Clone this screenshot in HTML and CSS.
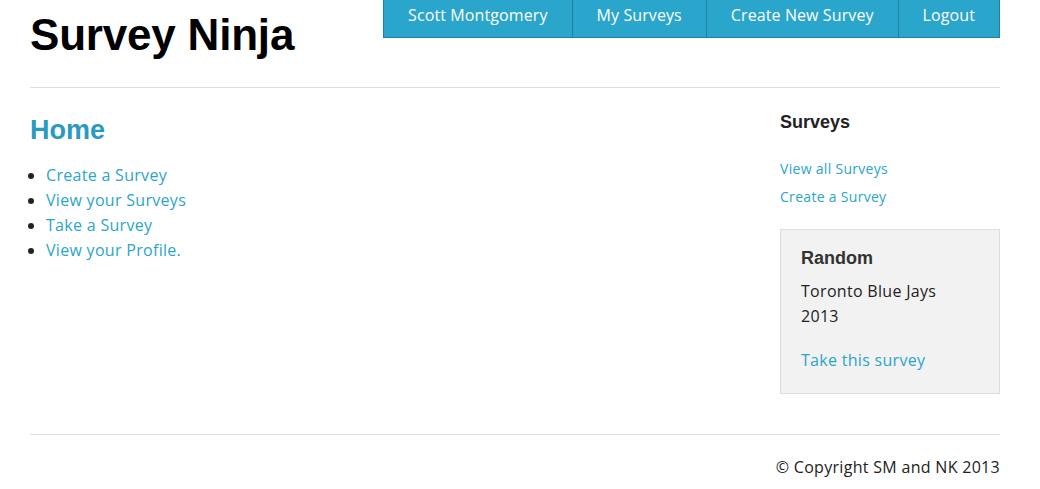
FILE: index.html
```html
<!DOCTYPE html>
<html>
<head>
<meta charset="utf-8">
<link rel="stylesheet" href="styles.css">
</head>
<body>
<div class="page">
  <header class="header">
    <h1 class="logo">Survey Ninja</h1>
    <nav class="nav">
      <a class="nav-item" href="#">Scott Montgomery</a>
      <a class="nav-item" href="#">My Surveys</a>
      <a class="nav-item" href="#">Create New Survey</a>
      <a class="nav-item" href="#">Logout</a>
    </nav>
  </header>
  <div class="content">
    <main class="main">
      <h2 class="title">Home</h2>
      <ul class="list">
        <li><a href="#">Create a Survey</a></li>
        <li><a href="#">View your Surveys</a></li>
        <li><a href="#">Take a Survey</a></li>
        <li><a href="#">View your Profile.</a></li>
      </ul>
    </main>
    <aside class="side">
      <h3 class="side-title">Surveys</h3>
      <a class="side-link" href="#">View all Surveys</a>
      <a class="side-link" href="#">Create a Survey</a>
      <div class="box">
        <h3 class="box-title">Random</h3>
        <p class="box-text">Toronto Blue Jays<br>2013</p>
        <a class="box-link" href="#">Take this survey</a>
      </div>
    </aside>
  </div>
  <footer class="footer">© Copyright SM and NK 2013</footer>
</div>
</body>
</html>
```
FILE: styles.css
```css
html, body { margin: 0; padding: 0; background: #fff; }
body { font-family: "Open Sans", "Noto Sans", sans-serif; color: #222; font-size: 16px; letter-spacing: 0.3px; }
a { color: #2aa5cc; text-decoration: none; }
.page { width: 970px; margin: 0 0 0 30px; }
.header { display: flex; justify-content: space-between; align-items: flex-start; height: 87px; border-bottom: 1px solid #ddd; }
.logo { margin: 11px 0 0 0; font-family: "Liberation Sans", Arial, sans-serif; font-size: 44px; font-weight: bold; color: #000; line-height: 48px; letter-spacing: -0.2px; }
.nav { display: flex; background: #2aa5cc; border: 1px solid #1f82a3; border-top: none; height: 37px; }
.nav-item { color: #fff; font-size: 16px; line-height: 31px; padding: 0 24px; border-left: 1px solid #1f82a3; font-weight: 500; letter-spacing: 0.1px; }
.nav-item:first-child { border-left: none; }
.content { display: flex; justify-content: space-between; height: 346px; border-bottom: 1px solid #ddd; }
.main { flex: 1; }
.title { margin: 26px 0 0 0; font-family: "Liberation Sans", Arial, sans-serif; font-size: 27px; color: #2a9abf; line-height: 32px; letter-spacing: 0; }
.list { margin: 17px 0 0 0; padding-left: 16px; line-height: 25px; font-size: 16px; }
.side { width: 220px; display: flex; flex-direction: column; align-items: flex-start; }
.side-title { margin: 22px 0 0 0; font-family: "Liberation Sans", Arial, sans-serif; font-size: 18px; line-height: 24px; color: #222; letter-spacing: 0; }
.side-link { font-size: 14px; line-height: 28px; }
.side-title + .side-link { margin-top: 21px; }
.box { align-self: stretch; margin-top: 18px; background: #f2f2f2; border: 1px solid #ddd; padding: 16px 20px 20px 20px; }
.box-title { margin: 0; font-family: "Liberation Sans", Arial, sans-serif; font-size: 18px; line-height: 24px; color: #333; letter-spacing: 0; }
.box-text { margin: 9px 0 0 0; line-height: 25px; }
.box-link { display: block; margin-top: 19px; line-height: 25px; }
.footer { text-align: right; padding-top: 20px; line-height: 24px; font-size: 16px; }
```
